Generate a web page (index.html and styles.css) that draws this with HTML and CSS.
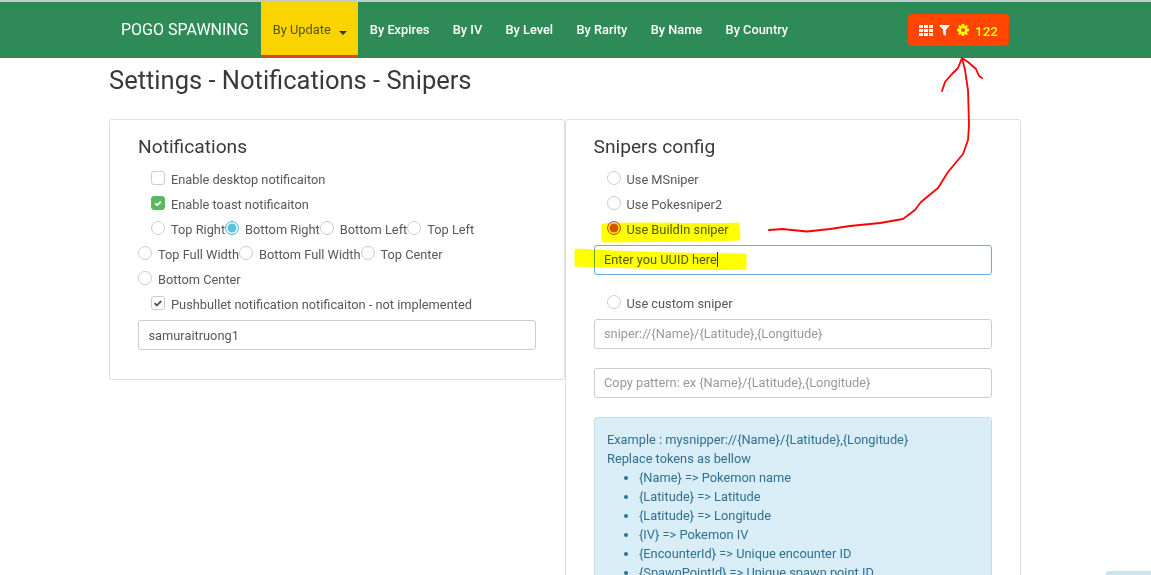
FILE: index.html
```html
<!DOCTYPE html>
<html lang="en">
<head>
<meta charset="utf-8">
<title>Settings - Notifications - Snipers</title>
<link rel="stylesheet" href="styles.css">
</head>
<body>
<nav class="navbar">
  <a class="brand">POGO SPAWNING</a>
  <a class="nav-item active">By Update <span class="caret"></span></a>
  <a class="nav-item">By Expires</a>
  <a class="nav-item">By IV</a>
  <a class="nav-item">By Level</a>
  <a class="nav-item">By Rarity</a>
  <a class="nav-item">By Name</a>
  <a class="nav-item">By Country</a>
  <div class="counter">
    <svg class="ico" width="14" height="11" viewBox="0 0 14 11"><path fill="#fff" d="M0 0h4v3H0zM5 0h4v3H5zM10 0h4v3h-4zM0 4h4v3H0zM5 4h4v3H5zM10 4h4v3h-4zM0 8h4v3H0zM5 8h4v3H5zM10 8h4v3h-4z"/></svg>
    <svg class="ico" width="11" height="11" viewBox="0 0 11 11"><path fill="#fff" d="M0 0h11L6.800 5v6L4.200 9V5z"/></svg>
    <svg class="ico" width="12" height="12" viewBox="0 0 13 13"><path fill="#ff0" fill-rule="evenodd" d="M5.200 0h2.600l.3 1.800 1.100.5L10.700 1.200l1.100 1.100-1.100 1.600.5 1.100 1.800.3v2.600l-1.800.3-.5 1.100 1.100 1.600-1.100 1.100-1.600-1.100-1.100.5-.3 1.800H5.200l-.3-1.800-1.100-.5-1.600 1.100-1.100-1.100 1.100-1.600-.5-1.100L0 7.800V5.200l1.800-.3.5-1.100-1.100-1.600 1.100-1.100 1.600 1.100 1.100-.5zM6.500 4.300a2.200 2.200 0 1 0 0 4.400 2.200 2.200 0 0 0 0-4.400z"/></svg>
    <span class="count">122</span>
  </div>
</nav>

<main class="page">
  <h1 class="title">Settings - Notifications - Snipers</h1>
  <div class="cards">
    <section class="card card-left">
      <h2 class="card-title">Notifications</h2>
      <div class="row indent"><span class="box"></span><span class="lbl">Enable desktop notificaiton</span></div>
      <div class="row indent"><span class="box box-green"><svg width="14" height="14" viewBox="0 0 14 14"><path d="M3.700 7.300l2.300 2.200 4.300-4.200" fill="none" stroke="#fff" stroke-width="2"/></svg></span><span class="lbl">Enable toast notificaiton</span></div>
      <div class="row indent">
        <span class="opt"><span class="radio"></span><span class="lbl">Top Right</span></span>
        <span class="opt"><span class="radio radio-blue"></span><span class="lbl">Bottom Right</span></span>
        <span class="opt"><span class="radio"></span><span class="lbl">Bottom Left</span></span>
        <span class="opt"><span class="radio"></span><span class="lbl">Top Left</span></span>
      </div>
      <div class="row">
        <span class="opt"><span class="radio"></span><span class="lbl">Top Full Width</span></span>
        <span class="opt"><span class="radio"></span><span class="lbl">Bottom Full Width</span></span>
        <span class="opt"><span class="radio"></span><span class="lbl">Top Center</span></span>
      </div>
      <div class="row">
        <span class="opt"><span class="radio"></span><span class="lbl">Bottom Center</span></span>
      </div>
      <div class="row indent"><span class="box"><svg width="12" height="12" viewBox="0 0 12 12"><path d="M2.500 6.200l2.300 2.200 4.500-4.400" fill="none" stroke="#555" stroke-width="1.800"/></svg></span><span class="lbl">Pushbullet notification notificaiton - not implemented</span></div>
      <input class="field field-first" type="text" value="samuraitruong1">
    </section>

    <section class="card card-right">
      <h2 class="card-title">Snipers config</h2>
      <div class="row indent"><span class="radio"></span><span class="lbl">Use MSniper</span></div>
      <div class="row indent"><span class="radio"></span><span class="lbl">Use Pokesniper2</span></div>
      <div class="row indent"><span class="radio radio-red"></span><span class="lbl">Use BuildIn sniper</span></div>
      <div class="field field-focus">Enter you UUID here<span class="cursor"></span></div>
      <div class="row indent row-custom"><span class="radio"></span><span class="lbl">Use custom sniper</span></div>
      <input class="field field-pattern" type="text" placeholder="sniper://{Name}/{Latitude},{Longitude}">
      <input class="field field-copy" type="text" placeholder="Copy pattern: ex {Name}/{Latitude},{Longitude}">
      <div class="alert">
        <div>Example : mysnipper://{Name}/{Latitude},{Longitude}</div>
        <div>Replace tokens as bellow</div>
        <ul class="tokens">
          <li>{Name} =&gt; Pokemon name</li>
          <li>{Latitude} =&gt; Latitude</li>
          <li>{Latitude} =&gt; Longitude</li>
          <li>{IV} =&gt; Pokemon IV</li>
          <li>{EncounterId} =&gt; Unique encounter ID</li>
          <li>{SpawnPointId} =&gt; Unique spawn point ID</li>
        </ul>
      </div>
    </section>
  </div>
</main>

<div class="corner-tab"></div>

<svg class="marks" width="1151" height="575" viewBox="0 0 1151 575">
  <path class="hl" d="M603 225 C640 222 700 226 738 224 L739 239 C700 241 640 240 603 241z"/>
  <path class="hl" d="M576 250 L612 252 L670 254 L745 255 L745 268 C700 270 640 267 576 265z"/>
  <path class="arrow" d="M769 230 L783 229 L787 229.500 L807 231.500 L830 229 L850 226 L880 223 L903 219 L915 210 L921 202 L938 188 L948 172 L963 154 L968 140 L969 125 L968 90 L965 70 L962 58"/>
  <path class="arrow" d="M942 91 L945 82 L952 74 L958 68 L962 58 L968 62 L976 69 L979 76 L982 78"/>
</svg>
</body>
</html>
```
FILE: styles.css
```css
* { box-sizing: border-box; }
html, body { margin: 0; height: 575px; overflow: hidden; }
body {
  position: relative;
  background: #fff;
  font-family: Roboto, "Liberation Sans", sans-serif;
  font-size: 12.800px;
  color: #373a3c;
}
.navbar {
  display: flex;
  align-items: stretch;
  height: 58px;
  border-top: 2px solid #c8c8c8;
  background: #2e8b57;
  padding-left: 121px;
  color: #fff;
}
.brand { font-size: 16px; line-height: 55px; margin-right: 12.500px; white-space: nowrap; }
.nav-item {
  padding: 0 11.700px;
  line-height: 55px;
  font-weight: 500;
  font-size: 12.800px;
  white-space: nowrap;
}
.nav-item.active {
  width: 97px;
  background: #fad400;
  color: #5a5200;
  font-weight: 400;
  border-bottom: 3px solid #d9472b;
}
.caret {
  display: inline-block;
  margin-left: 5px;
  vertical-align: -1px;
  border-top: 4px solid #333;
  border-left: 4px solid transparent;
  border-right: 4px solid transparent;
}
.counter {
  display: flex;
  align-items: center;
  gap: 6px;
  position: absolute;
  left: 908px;
  top: 14px;
  width: 101px;
  height: 32px;
  padding-left: 11px;
  background: #ff4500;
  border-radius: 4px;
}
.ico:last-of-type { margin-left: 1px; }
.count { color: #ff0; font-size: 13.500px; font-weight: 500; padding-top: 2px; }
.page { padding: 0 0 0 109px; }
.title {
  margin: 0;
  height: 61px;
  padding-top: 4px;
  font-size: 25.500px;
  font-weight: 400;
  line-height: 36px;
  color: #373a3c;
}
.cards { display: flex; align-items: flex-start; }
.card {
  width: 456px;
  padding: 16px 28px 0;
  border: 1px solid #ddd;
  border-radius: 3px;
}
.card-left { height: 261px; }
.card-right { height: 600px; padding-left: 27.500px; }
.card-title {
  margin: 0 0 9px;
  font-size: 19.200px;
  font-weight: 400;
  line-height: 22px;
  color: #373a3c;
}
.row {
  display: flex;
  align-items: center;
  height: 25px;
  color: #55595c;
}
.row.indent { padding-left: 13px; }
.opt { display: flex; align-items: center; }
.lbl { margin-left: 6px; line-height: 25px; }
.box, .radio {
  flex: none;
  display: flex;
  align-items: center;
  justify-content: center;
  width: 14px;
  height: 14px;
  margin-top: -4px;
  border: 1px solid #ccc;
  background: #fff;
}
.box { border-radius: 3px; }
.box-green { background: #5cb85c; border-color: #5cb85c; }
.radio { border-radius: 50%; }
.radio-blue { background: #5bc0de; border-color: #5bc0de; box-shadow: inset 0 0 0 1.500px #fff; }
.radio-red { background: #d9534f; border-color: #d9534f; box-shadow: inset 0 0 0 1.500px #fff; }
.field {
  display: block;
  width: 398px;
  height: 30px;
  padding: 0 9.500px;
  border: 1px solid #ccc;
  border-radius: 3px;
  background: #fff;
  font: 12.800px/28px Roboto, "Liberation Sans", sans-serif;
  color: #55595c;
  outline: 0;
}
.field::placeholder { color: #999; opacity: 1; }
.field-first { margin-top: 3px; }
.field-focus { margin-top: 3px; border-color: #66afe9; }
.cursor { display: inline-block; width: 1px; height: 15px; background: #333; vertical-align: -3px; }
.row-custom { margin-top: 16px; }
.field-pattern { margin-top: 3px; padding-bottom: 2px; }
.field-copy { margin-top: 19px; padding-bottom: 2px; }
.alert {
  width: 398px;
  margin-top: 19px;
  padding: 12px 12.500px;
  border: 1px solid #bcdff1;
  border-radius: 3px;
  background: #d9edf7;
  color: #31708f;
  line-height: 19px;
}
.tokens { margin: 0; padding-left: 32px; }
.corner-tab {
  position: absolute;
  right: 0;
  top: 571px;
  width: 45px;
  height: 4px;
  background: #cde4ea;
  border-radius: 3px 0 0 0;
}
.marks { position: absolute; left: 0; top: 0; pointer-events: none; }
.hl { fill: #ffff00; stroke: #ffff00; stroke-width: 3; stroke-linejoin: round; mix-blend-mode: multiply; }
.arrow { fill: none; stroke: #f00; stroke-width: 1.800; stroke-linejoin: round; stroke-linecap: round; }
```
